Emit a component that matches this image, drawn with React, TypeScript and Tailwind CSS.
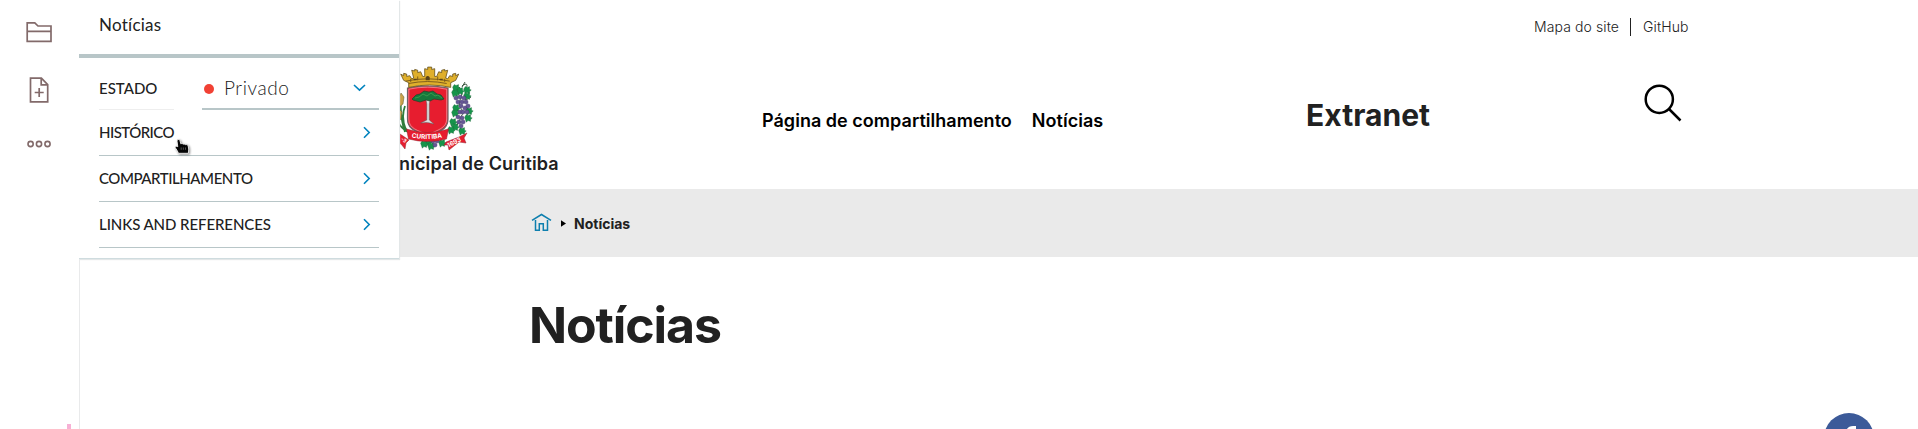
import React from "react";

function Chevron() {
  return (
    <svg className="mr-[8px] h-[13px] w-[8px]" viewBox="0 0 8 13" fill="none" stroke="#0083be" strokeWidth="1.6">
      <path d="M1 1.2 6.2 6.5 1 11.8" />
    </svg>
  );
}

function Row({ label, tracking }: { label: string; tracking: string }) {
  return (
    <div className="flex h-[46px] items-center justify-between border-b border-[#b8c6c8]">
      <span className={`whitespace-nowrap pb-[2px] text-[15px] font-medium leading-[20px] ${tracking}`}>{label}</span>
      <Chevron />
    </div>
  );
}

function Toolbar() {
  return (
    <aside className="flex h-full w-[80px] shrink-0 flex-col items-center border-r border-[#e9eaeb] bg-white pr-px">
      <svg className="mt-[21px] h-[22px] w-[26px] shrink-0" viewBox="0 0 26 22" fill="none" stroke="#826a6a" strokeWidth="1.7">
        <path d="M1.2 20.4V1.8h7.6l3.2 3.2H25v15.4zM1 10.4h24" />
      </svg>
      <svg className="mt-[34px] h-[26px] w-[20px] shrink-0" viewBox="0 0 20 26" fill="none" stroke="#826a6a" strokeWidth="1.7">
        <path d="M1.5 1.2h10.900l6.300 6.400v17.200H1.500zM12.200 1v6.800h6.500M10.200 11v9M5.700 15.500h9" />
      </svg>
      <svg className="mt-[36px] h-[10px] w-[24px] shrink-0" viewBox="0 0 24 10" fill="none" stroke="#826a6a" strokeWidth="1.6">
        <circle cx="3.6" cy="5" r="2.6" />
        <circle cx="12" cy="5" r="2.6" />
        <circle cx="20.5" cy="5" r="2.6" />
      </svg>
      <i className="ml-[59px] mt-auto h-[5px] w-[4px] bg-[#f7b1d5]" />
    </aside>
  );
}

function Pointer() {
  return (
    <svg className="absolute left-[75px] top-[28px] h-[17px] w-[17px] drop-shadow-[1px_1px_1px_rgba(0,0,0,0.45)]" viewBox="0 0 18 18">
      <path d="M4.2 1.6c1.3-.4 2 .4 2.2 1.4l.8 3.200c1-.6 2-.3 2.400.4 1-.5 2-.2 2.400.5 1.600-.5 2.800.3 3 1.400l.6 3.200c.1 1.300-.4 3-.4 4.500H4.700C4 14.200 3 12.500 1.500 10.500c-.7-1.100.7-2.300 2.500-1.300L3.200 3.300c-.1-.9.200-1.500 1-1.700z" fill="#050505" stroke="#fff" strokeWidth=".9" />
      <path d="M7.600 10v2.500M9.900 10v2.500M12.200 10v2.500" stroke="#888" strokeWidth=".6" />
    </svg>
  );
}

function Panel() {
  return (
    <section className="relative z-10 -ml-px h-[259px] w-[320px] shrink-0 border-b border-[#cfdcdf] bg-white font-[Lato,sans-serif] text-[#212121] shadow-[1px_1px_1px_#e3e7e8]">
      <div className="h-[58px] border-b-4 border-[#b8c6c8] pl-[20px] pt-[15px] text-[17px] font-normal leading-[20px] tracking-[0.25px]">Notícias</div>
      <div className="ml-[20px] w-[280px]">
        <div className="flex h-[52px] justify-between">
          <div className="h-full w-[75px] border-b border-[#eeeeee] pt-[20px] text-[15px] font-medium leading-[20px]">ESTADO</div>
          <div className="flex h-full w-[177px] items-center border-b-2 border-[#b8c6c8] pt-[10px]">
            <i className="ml-[2px] mt-[2px] size-[10px] rounded-full bg-[#f14134]" />
            <span className="ml-[10px] pb-[1px] text-[19px] font-light leading-[20px] tracking-[0.6px] text-[#212121]">Privado</span>
            <svg className="ml-auto mr-[13px] h-[8px] w-[13px]" viewBox="0 0 13 8" fill="none" stroke="#0083be" strokeWidth="1.6">
              <path d="m1 1 5.500 5.200L12 1" />
            </svg>
          </div>
        </div>
        <div className="relative">
          <Row label="HISTÓRICO" tracking="tracking-[-0.55px]" />
          <Pointer />
        </div>
        <Row label="COMPARTILHAMENTO" tracking="tracking-[-0.45px]" />
        <Row label="LINKS AND REFERENCES" tracking="tracking-[-0.08px]" />
      </div>
    </section>
  );
}

const grapes = [
  [60, 36], [64, 35], [68, 36], [62, 40], [66, 40], [70, 40], [65, 44], [69, 46], [72, 44], [64, 50],
  [67, 50], [71, 50], [62, 55], [66, 56], [63, 60], [67, 60], [65, 64], [37, 79], [41, 79], [39, 83],
];

const leaves = [
  [60, 26], [64, 29], [71, 28], [59, 31], [71, 34], [73, 49], [72, 56], [60, 46],
  [59, 51], [57, 60], [59, 65], [55, 68], [66, 69], [32, 80], [35, 84], [46, 81], [28, 82],
];

function Crest() {
  return (
    <svg className="block h-[90px] w-[80px]" viewBox="3 0 80 90">
      <g stroke="#2f7d3c" strokeWidth="1.800" fill="none">
        <path d="M5 36c-1 12 0 22 4 34M4 50c2 10 4 15 8 20M9 44c-3 8-2 17 1 24M3 62c3 4 6 7 10 8" />
        <path d="M63 25c8 9-6 15 5 25-6 8-4 12-12 19M66 24c5-4 6-1 4 3M69 20l-3 5M70 38l5-3" strokeWidth="1" stroke="#3b5540" />
      </g>
      <path d="m5 31 3 4-1 7-4 3V35zM3 47l3 3-1 7-2 2z" fill="#c9a24a" stroke="#5c5425" strokeWidth=".5" />
      <g fill="#15944a" stroke="#245e37" strokeWidth=".4">
        {leaves.map(([x, y]) => (
          <path key={`${x}-${y}`} transform={`translate(${x} ${y}) scale(.85)`} d="m-4-1 2-3 2 1 3-1v3l2 1-2 2v2l-3-1-2 2-1-3z" />
        ))}
      </g>
      <g fill="#655796" stroke="#3b315f" strokeWidth=".4">
        {grapes.map(([x, y]) => (
          <circle key={`${x}-${y}`} cx={x} cy={y} r="2.100" />
        ))}
      </g>
      <path d="M11.500 26q10-2 20-2t20.500 2v31c0 11-9 12-20.500 18C21 69 11.500 68 11.500 57z" fill="#e71d2f" stroke="#6c6466" strokeWidth="1.200" />
      <path d="M12.800 27.200q9-2 18.700-2t19.200 2V57c0 9-9 11-19.200 16C22 68 12.800 67 12.800 57z" fill="none" stroke="#f8d4d8" strokeWidth=".5" />
      <path d="m29.800 37 1 5v16l-6 3q7-1.500 13 1l-4.500-4V42l1-5z" fill="#ddd" stroke="#59595b" strokeWidth=".5" />
      <path d="m16 37 4-4 4-1 4-3 5 1 4-1 4 3 4 1 3 4-3 1-7-1-4 2-4-1-6 2-7-2z" fill="#16783c" stroke="#263d28" strokeWidth=".7" />
      <path d="m19 36 4-1 4-3 4 2 4-3 4 3 3-1 4 3" fill="none" stroke="#46a754" strokeWidth=".7" />
      <g transform="translate(-4.300 1.200) scale(1 .78)">
        <path d="m9 14 3 2V13l3 1v3l3-1 2 4 2-1-2-10 3 1V8l3 1v3l3-1 2 6h2V7l3 1V5h4v3l3-1v10h2l2-6 3 1V9l3-1v2l3-1-2 10 2 1 2-4 3 1v-3l3-1v3l3-2-3 8-5 3v6q-21-6-42 0v-6l-5-3z" fill="#dfaf2b" stroke="#65501c" strokeWidth=".9" />
        <path d="M14 23q22-6 44 0M17 26q19-5 38 0M19 20v4M26 17v5M46 17v5M53 20v4" fill="none" stroke="#73551a" />
        <path d="M34 22v-4q2-3 4 0v4zM22 22v-2h3v2M48 22v-2h3v2" fill="#59431a" />
      </g>
      <path d="m1 70 12 8-3 3-1 6-4-5-4-2zM48 83l2-3 13-5 8-4-3 5 2 5-7-1-10 8-1-5z" fill="#e71d2f" stroke="#8f2631" strokeWidth=".5" />
      <path d="M10.500 67q21 7 42 0l-2 10q-19 5-38 0z" fill="#e71d2f" stroke="#8f2631" strokeWidth=".5" />
      <path id="motto" d="M15.500 75.500q16 3 32-.2" fill="none" />
      <text fill="#fff" fontFamily="Inter, sans-serif" fontSize="6.400" fontWeight="700">
        <textPath href="#motto" textLength="31">CURITIBA</textPath>
      </text>
      <text transform="translate(52.500 85.500) rotate(-27)" fill="#fff" fontFamily="Inter, sans-serif" fontSize="6.200" fontWeight="700">1693</text>
      <text transform="translate(4.500 78) rotate(34)" fill="#fff" fontFamily="Inter, sans-serif" fontSize="5" fontWeight="700">-3</text>
    </svg>
  );
}

function Header() {
  return (
    <header className="flex h-[189px] items-start">
      <div className="w-[363px] shrink-0 pt-[62px]">
        <Crest />
        <div className="whitespace-nowrap text-[18px] font-semibold leading-[24px] tracking-[0.12px]">nicipal de Curitiba</div>
      </div>
      <nav className="flex w-[544px] shrink-0 gap-[20px] pt-[109px] text-[18px] font-semibold leading-[24px] tracking-[0.03px] text-black">
        <a>Página de compartilhamento</a>
        <a>Notícias</a>
      </nav>
      <div className="w-[228px] shrink-0 pt-[97px] text-[30px] font-bold leading-[36px] tracking-[0.04px]">Extranet</div>
      <div className="w-[156px] shrink-0">
        <div className="flex items-center whitespace-nowrap pt-[17px] text-[14px] font-light leading-[20px] tracking-[0.1px]">
          <a>Mapa do site</a>
          <i className="ml-[11px] mr-[12px] h-[18px] w-px bg-[#212121]" />
          <a>GitHub</a>
        </div>
        <svg className="ml-[109px] mt-[46px] h-[40px] w-[40px]" viewBox="0 0 40 40" fill="none" stroke="#000" strokeWidth="2.500">
          <circle cx="16.300" cy="16.300" r="13.600" />
          <path d="m26 26 11.500 11.500" />
        </svg>
      </div>
    </header>
  );
}

export default function App() {
  return (
    <div className="relative flex h-[429px] w-[1918px] overflow-hidden bg-white font-[Inter,'Liberation_Sans',sans-serif] text-[#212121]">
      <Toolbar />
      <Panel />
      <main className="min-w-0 flex-1">
        <Header />
        <div className="flex h-[68px] items-center bg-[#eaeaea] pl-[132px] text-[14px] font-bold">
          <svg className="mb-[2px] h-[20px] w-[21px]" viewBox="0 0 21 20" fill="none" stroke="#0e7fae" strokeWidth="1.500">
            <path d="M1 8.300 10.500 2.500 20 8.300M4.500 8v10.200h3.800v-6.500h4v6.500h4.200V8" />
          </svg>
          <svg className="ml-[9px] h-[7px] w-[5px]" viewBox="0 0 5 7">
            <path d="m0 .3 5 3.200-5 3.200z" fill="#000" />
          </svg>
          <span className="ml-[8px]">Notícias</span>
        </div>
        <h1 className="pl-[130px] pt-[35px] text-[50px] font-bold leading-[66px] tracking-[-1.1px]">Notícias</h1>
      </main>
      <a className="absolute left-[1824px] top-[413px] size-[50px] overflow-hidden rounded-full bg-[#3c5a99]">
        <svg className="h-full w-full" viewBox="0 0 50 50">
          <path d="M22 42V29h-4v-5h4v-4c0-4.800 3-7 7-7h3v5h-2.500c-2 0-2.500 1-2.500 2.500V24h5l-.7 5H27v13z" fill="#fff" />
        </svg>
      </a>
    </div>
  );
}
